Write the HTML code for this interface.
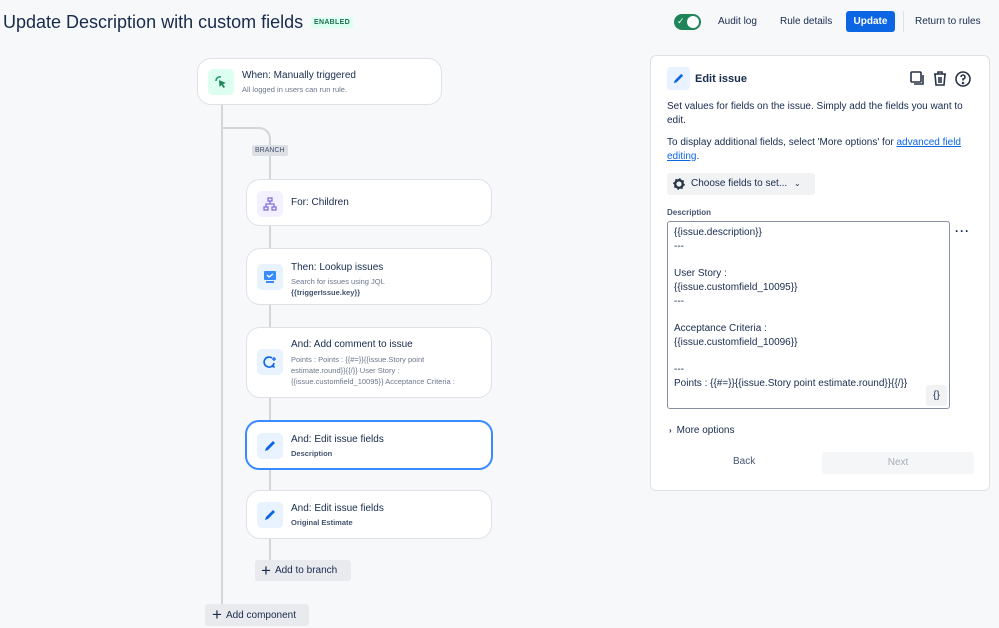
<!DOCTYPE html>
<html><head><meta charset="utf-8"><style>
*{box-sizing:border-box;margin:0;padding:0}
body{width:999px;height:628px;overflow:hidden;background:#f7f8f9;font-family:"Liberation Sans",sans-serif;color:#172b4d;position:relative}
.a{position:absolute}
.card{position:absolute;background:#fff;border:1px solid #dfe1e6;border-radius:14px}
.ic{position:absolute;left:10px;width:26px;height:26px;border-radius:5px;display:flex;align-items:center;justify-content:center}
.t{position:absolute;left:44px;font-size:10px;color:#172b4d}
.s{position:absolute;left:44px;font-size:7.5px;color:#6b778c;line-height:11px}
.b{font-weight:bold;color:#44546f}
.btn{position:absolute;background:#e9eaee;border-radius:3px;font-size:10px;display:flex;align-items:center;color:#172b4d}
.line{position:absolute;background:#d3d5da}
</style></head><body>
<div class="a" style="left:3px;top:12px;font-size:18px;color:#172b4d">Update Description with custom fields</div>
<div class="a" style="left:311px;top:17px;font-size:7px;font-weight:bold;color:#216e4e;background:#dcfff1;padding:2px 3px;letter-spacing:.3px">ENABLED</div>
<div class="a" style="left:674px;top:14px;width:27px;height:16px;border-radius:8px;background:#1f845a"><div class="a" style="left:13px;top:2px;width:12px;height:12px;border-radius:6px;background:#fff"></div><div class="a" style="left:3px;top:2px;color:#fff;font-size:9px">✓</div></div>
<div class="a" style="left:718px;top:16px;font-size:10px">Audit log</div>
<div class="a" style="left:780px;top:16px;font-size:10px">Rule details</div>
<div class="a" style="left:846px;top:11px;width:49px;height:21px;background:#0c66e4;border-radius:3px;color:#fff;font-size:10px;font-weight:bold;text-align:center;line-height:21px">Update</div>
<div class="a" style="left:903px;top:11px;width:1px;height:21px;background:#dfe1e6"></div>
<div class="a" style="left:915px;top:16px;font-size:10px">Return to rules</div>

<div class="line" style="left:221px;top:104px;width:2px;height:500px"></div>
<div class="a" style="left:222px;top:127px;width:49px;height:30px;border-top:2px solid #d3d5da;border-right:2px solid #d3d5da;border-top-right-radius:12px"></div>
<div class="line" style="left:269px;top:155px;width:2px;height:405px"></div>
<div class="a" style="left:252px;top:145px;background:#dcdfe4;color:#44546f;font-size:7px;padding:2px 3px;border-radius:2px">BRANCH</div>

<div class="card" style="left:197px;top:58px;width:245px;height:47px">
<div class="ic" style="top:10px;background:#dcfff1"><svg width="14" height="14" viewBox="0 0 14 14"><path d="M2 6a4 4 0 0 1 5-4" stroke="#22a06b" stroke-width="1.6" fill="none"/><path d="M5 5l7 3-3 1 2 3-1.5 1-2-3-2 2z" fill="#1f845a"/></svg></div>
<div class="t" style="top:11px">When: Manually triggered</div><div class="s" style="top:25px">All logged in users can run rule.</div></div>

<div class="card" style="left:246px;top:179px;width:246px;height:47px">
<div class="ic" style="top:11px;background:#f3f0ff"><svg width="14" height="14" viewBox="0 0 14 14" fill="none" stroke="#8270db" stroke-width="1.3"><rect x="5" y="1" width="4" height="3"/><rect x="1" y="10" width="4" height="3"/><rect x="9" y="10" width="4" height="3"/><path d="M7 4v3M3 10V7h8v3"/></svg></div>
<div class="t" style="top:17px">For: Children</div></div>

<div class="card" style="left:246px;top:248px;width:246px;height:57px">
<div class="ic" style="top:15px;background:#e9f2ff"><svg width="14" height="14" viewBox="0 0 14 14"><rect x="1" y="1" width="12" height="9" rx="1" fill="#388bff"/><path d="M4 5l2 2 4-3" stroke="#fff" stroke-width="1.3" fill="none"/><rect x="3" y="11" width="8" height="2" fill="#388bff"/></svg></div>
<div class="t" style="top:13px">Then: Lookup issues</div><div class="s" style="top:27px">Search for issues using JQL<br><span class="b">{{triggerIssue.key}}</span></div></div>

<div class="card" style="left:246px;top:327px;width:246px;height:71px">
<div class="ic" style="top:21px;background:#e9f2ff"><svg width="14" height="14" viewBox="0 0 14 14"><path d="M11 8a5 5 0 1 1-2-5" stroke="#0c66e4" stroke-width="1.6" fill="none"/><path d="M9 12l3 1-1-3" fill="#0c66e4"/><path d="M11 2v4M9 4h4" stroke="#0c66e4" stroke-width="1.2"/></svg></div>
<div class="t" style="top:11px">And: Add comment to issue</div><div class="s" style="top:26px">Points : Points : {{#=}}{{issue.Story point<br>estimate.round}}{{/}} User Story :<br>{{issue.customfield_10095}} Acceptance Criteria :</div></div>

<div class="card" style="left:245px;top:420px;width:248px;height:50px;border:2px solid #388bff">
<div class="ic" style="top:11px;background:#e9f2ff"><svg width="14" height="14" viewBox="0 0 14 14"><path d="M2 12l1-3 7-7 2 2-7 7z" fill="#0c66e4"/></svg></div>
<div class="t" style="top:12px">And: Edit issue fields</div><div class="s b" style="top:26px">Description</div></div>

<div class="card" style="left:246px;top:490px;width:246px;height:49px">
<div class="ic" style="top:11px;background:#e9f2ff"><svg width="14" height="14" viewBox="0 0 14 14"><path d="M2 12l1-3 7-7 2 2-7 7z" fill="#0c66e4"/></svg></div>
<div class="t" style="top:12px">And: Edit issue fields</div><div class="s b" style="top:26px">Original Estimate</div></div>

<div class="btn" style="left:255px;top:560px;width:96px;height:21px"><span style="font-size:17px;margin:0 4px 0 6px;font-weight:300">+</span>Add to branch</div>
<div class="btn" style="left:205px;top:604px;width:104px;height:22px"><span style="font-size:17px;margin:0 4px 0 7px;font-weight:300">+</span>Add component</div>

<div class="a" style="left:650px;top:55px;width:340px;height:436px;background:#fff;border:1px solid #dfe1e6;border-radius:6px">
<div class="a" style="left:16px;top:11px;width:23px;height:23px;border-radius:4px;background:#e9f2ff;display:flex;align-items:center;justify-content:center"><svg width="13" height="13" viewBox="0 0 14 14"><path d="M2 12l1-3 7-7 2 2-7 7z" fill="#0c66e4"/></svg></div>
<div class="a" style="left:44px;top:17px;font-size:11px;font-weight:bold">Edit issue</div>
<svg class="a" style="left:258px;top:13px" width="70" height="20" viewBox="0 0 70 20" fill="none" stroke="#283447" stroke-width="1.6"><rect x="2" y="3" width="10" height="10" rx="1"/><path d="M14 6v9H5"/><path d="M25 5h12M29 5V3h4v2M26 5l1 11h8l1-11M30 8v6M32 8v6"/><circle cx="54" cy="10" r="7"/><path d="M52 8a2 2 0 1 1 2 2v1.5"/><circle cx="54" cy="14" r=".5"/></svg>
<div class="a" style="left:16px;top:44px;font-size:10px;line-height:13.5px;width:310px">Set values for fields on the issue. Simply add the fields you want to edit.</div>
<div class="a" style="left:16px;top:80px;font-size:10px;line-height:13.5px;width:310px">To display additional fields, select 'More options' for <span style="color:#0c66e4;text-decoration:underline">advanced field editing</span>.</div>
<div class="a" style="left:16px;top:117px;width:148px;height:22px;background:#f1f2f4;border-radius:3px;font-size:10px;line-height:22px;padding-left:24px">Choose fields to set... <span style="font-size:8px;margin-left:4px">⌄</span>
<svg class="a" style="left:6px;top:5px" width="12" height="12" viewBox="0 0 12 12"><circle cx="6" cy="6" r="3.8" fill="none" stroke="#283447" stroke-width="2.4"/><circle cx="6" cy="6" r="5" fill="none" stroke="#283447" stroke-width="1.6" stroke-dasharray="1.6 2.3"/></svg></div>
<div class="a" style="left:16px;top:152px;font-size:8px;font-weight:bold;color:#44546f">Description</div>
<div class="a" style="left:16px;top:165px;width:283px;height:188px;border:1px solid #8590a2;border-radius:3px;padding:4px 6px;font-size:10px;line-height:13.7px;color:#172b4d">{{issue.description}}<br>---<br><br>User Story :<br>{{issue.customfield_10095}}<br>---<br><br>Acceptance Criteria :<br>{{issue.customfield_10096}}<br><br>---<br>Points : {{#=}}{{issue.Story point estimate.round}}{{/}}
<div class="a" style="left:258px;top:163px;width:21px;height:21px;background:#f1f2f4;border-radius:3px;font-size:10px;text-align:center;line-height:21px">{}</div></div>
<div class="a" style="left:304px;top:168px;font-size:12px;font-weight:bold;letter-spacing:1px">···</div>
<div class="a" style="left:18px;top:369px;font-size:10px"><span style="font-size:8px;font-weight:bold;margin-right:5px">›</span>More options</div>
<div class="a" style="left:82px;top:400px;font-size:10px;color:#44546f">Back</div>
<div class="a" style="left:171px;top:396px;width:152px;height:22px;background:#f5f6f7;border-radius:3px;font-size:10px;color:#a5adba;text-align:center;line-height:22px">Next</div>
</div>
</body></html>
